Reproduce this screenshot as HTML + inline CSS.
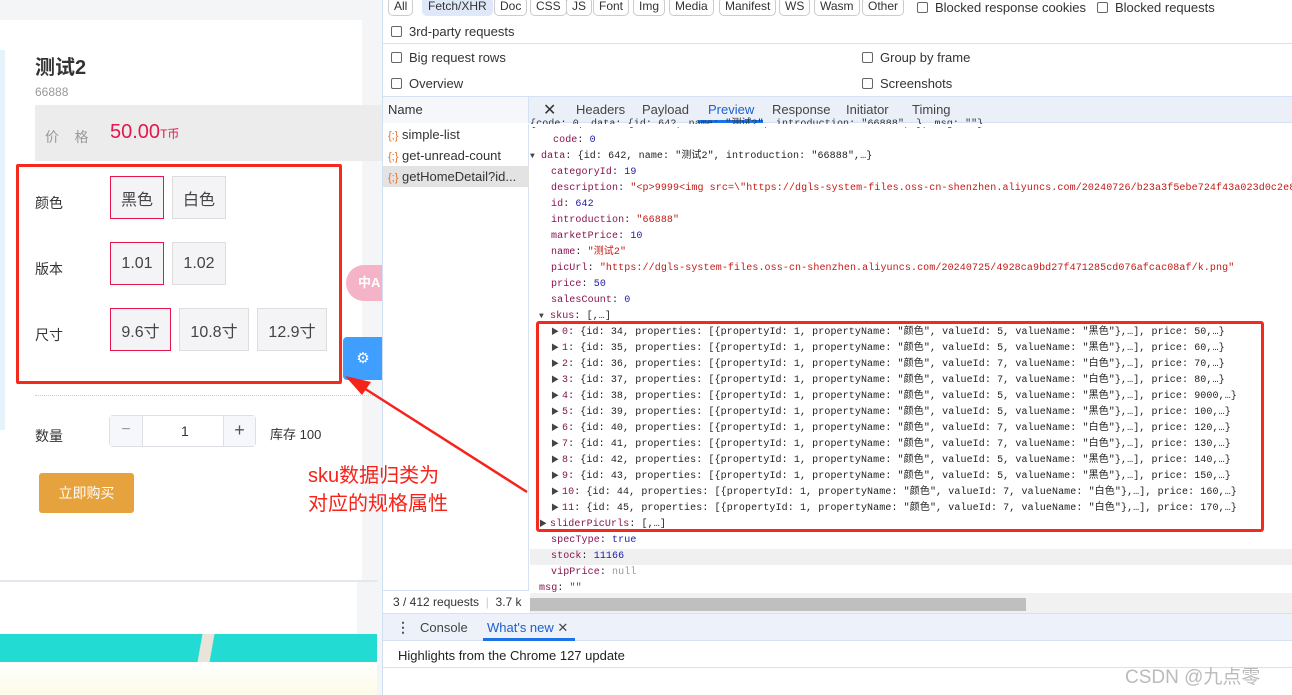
<!DOCTYPE html>
<html><head><meta charset="utf-8"><style>
*{margin:0;padding:0;box-sizing:border-box}
body{width:1292px;height:695px;overflow:hidden;position:relative;background:#fff;font-family:"Liberation Sans","Noto Sans CJK SC",sans-serif;color:#333}
.a{position:absolute;white-space:nowrap}
.btn{position:absolute;border:1px solid #ddd;background:#f4f4f6;font-size:16px;color:#444;display:flex;align-items:center;justify-content:center}
.sel{border-color:#e4164c}
.chip{position:absolute;top:-3px;height:19px;border:1px solid #ccc;border-radius:5px;font-size:12px;line-height:17px;padding:0 5px;color:#333;background:#fff}
.cb{display:inline-block;width:11px;height:11px;border:1px solid #666;border-radius:2px;vertical-align:-1px;margin-right:7px}
.dt{font-size:13px;color:#333}
.j{position:absolute;font-family:"Liberation Mono","Noto Sans CJK SC",monospace;font-size:10px;letter-spacing:0.1px;white-space:nowrap;line-height:16px;color:#222}
.k{color:#881350}.n{color:#1a1aa6}.s{color:#c41a16}.g{color:#999}
.tri{display:inline-block;font-size:8px;color:#444;width:11px}
</style></head><body>
<!-- left page -->
<div class="a" style="left:0;top:0;width:383px;height:695px;background:#f4f5f7"></div>
<div class="a" style="left:0;top:20px;width:362px;height:560px;background:#fff"></div>
<div class="a" style="left:0;top:50px;width:5px;height:380px;background:#e6f3fb"></div>
<div class="a" style="left:35px;top:51px;font-size:20px;font-weight:bold;color:#333">测试2</div>
<div class="a" style="left:35px;top:85px;font-size:12px;color:#999">66888</div>
<div class="a" style="left:35px;top:105px;width:348px;height:56px;background:#ececec"></div>
<div class="a" style="left:45px;top:127px;font-size:14px;color:#999">价&nbsp;&nbsp;&nbsp;&nbsp;格</div>
<div class="a" style="left:110px;top:121px;font-size:20px;color:#e4164c">50.00<span style="font-size:12px">T币</span></div>
<div class="a" style="left:16px;top:164px;width:326px;height:220px;border:3px solid #f52a1f;border-radius:2px"></div>
<div class="a" style="left:35px;top:193px;font-size:14px">颜色</div>
<div class="btn sel" style="left:110px;top:176px;width:54px;height:43px">黑色</div>
<div class="btn" style="left:172px;top:176px;width:54px;height:43px">白色</div>
<div class="a" style="left:35px;top:259px;font-size:14px">版本</div>
<div class="btn sel" style="left:110px;top:242px;width:54px;height:43px">1.01</div>
<div class="btn" style="left:172px;top:242px;width:54px;height:43px">1.02</div>
<div class="a" style="left:35px;top:325px;font-size:14px">尺寸</div>
<div class="btn sel" style="left:110px;top:308px;width:61px;height:43px">9.6寸</div>
<div class="btn" style="left:179px;top:308px;width:70px;height:43px">10.8寸</div>
<div class="btn" style="left:257px;top:308px;width:70px;height:43px">12.9寸</div>
<div class="a" style="left:346px;top:265px;width:40px;height:36px;border-radius:18px 0 0 18px;background:#f5b3c8;color:#fff;font-size:13px;font-weight:bold;line-height:36px;padding-left:12px">中A</div>
<div class="a" style="left:343px;top:337px;width:40px;height:43px;border-radius:4px 0 0 4px;background:#409eff;color:#fff;font-size:15px;text-align:center;line-height:43px">⚙</div>
<div class="a" style="left:35px;top:395px;width:340px;border-top:1px dotted #ccc"></div>
<div class="a" style="left:35px;top:426px;font-size:14px">数量</div>
<div class="a" style="left:109px;top:415px;width:147px;height:32px;border:1px solid #dcdfe6;border-radius:4px;background:#fff"></div>
<div class="a" style="left:110px;top:416px;width:33px;height:30px;background:#f5f7fa;border-right:1px solid #dcdfe6;text-align:center;line-height:28px;color:#999;font-size:16px">−</div>
<div class="a" style="left:223px;top:416px;width:32px;height:30px;background:#f5f7fa;border-left:1px solid #dcdfe6;text-align:center;line-height:28px;color:#555;font-size:18px">+</div>
<div class="a" style="left:181px;top:423px;font-size:14px;color:#333">1</div>
<div class="a" style="left:270px;top:424px;font-size:13px;color:#333">库存 100</div>
<div class="a" style="left:39px;top:473px;width:95px;height:40px;background:#e6a23c;border-radius:3px;color:#fff;font-size:14px;text-align:center;line-height:40px">立即购买</div>
<div class="a" style="left:0;top:580px;width:377px;height:2px;background:#e4e7ed"></div>
<div class="a" style="left:0;top:582px;width:357px;height:52px;background:#fff"></div>
<div class="a" style="left:0;top:634px;width:377px;height:28px;background:#22dcd4"></div>
<div class="a" style="left:200px;top:634px;width:12px;height:28px;background:#e8e4da;transform:skewX(-10deg)"></div>
<div class="a" style="left:0;top:662px;width:377px;height:33px;background:linear-gradient(#fff,#fdfbe8)"></div>
<!-- devtools -->
<div class="a" style="left:382px;top:0;width:910px;height:695px;background:#fff;border-left:1px solid #cfe0f5"></div>
<div class="chip" style="left:388px">All</div>
<div class="chip" style="left:422px;background:#dfe8f8;border-color:#dfe8f8">Fetch/XHR</div>
<div class="chip" style="left:494px">Doc</div>
<div class="chip" style="left:530px">CSS</div>
<div class="chip" style="left:566px">JS</div>
<div class="chip" style="left:593px">Font</div>
<div class="chip" style="left:633px">Img</div>
<div class="chip" style="left:669px">Media</div>
<div class="chip" style="left:719px">Manifest</div>
<div class="chip" style="left:779px">WS</div>
<div class="chip" style="left:814px">Wasm</div>
<div class="chip" style="left:862px">Other</div>
<div class="a dt" style="left:917px;top:0"><span class="cb"></span>Blocked response cookies</div>
<div class="a dt" style="left:1097px;top:0"><span class="cb"></span>Blocked requests</div>
<div class="a dt" style="left:391px;top:24px"><span class="cb"></span>3rd-party requests</div>
<div class="a" style="left:383px;top:43px;width:909px;border-top:1px solid #d6e2f3"></div>
<div class="a dt" style="left:391px;top:50px"><span class="cb"></span>Big request rows</div>
<div class="a dt" style="left:862px;top:50px"><span class="cb"></span>Group by frame</div>
<div class="a dt" style="left:391px;top:76px"><span class="cb"></span>Overview</div>
<div class="a dt" style="left:862px;top:76px"><span class="cb"></span>Screenshots</div>
<div class="a" style="left:383px;top:96px;width:909px;height:27px;background:#ebf0f8;border-top:1px solid #d6e2f3;border-bottom:1px solid #d6e2f3"></div>
<div class="a" style="left:383px;top:97px;width:146px;height:26px;background:#f5f7fb;border-right:1px solid #d6e2f3"></div>
<div class="a dt" style="left:388px;top:102px">Name</div>
<div class="a dt" style="left:543px;top:100px;font-size:16px">✕</div>
<div class="a dt" style="left:576px;top:102px;color:#444">Headers</div>
<div class="a dt" style="left:642px;top:102px;color:#444">Payload</div>
<div class="a dt" style="left:708px;top:102px;color:#1a5fd0">Preview</div>
<div class="a" style="left:698px;top:120px;width:65px;height:3px;background:#1a73e8"></div>
<div class="a dt" style="left:772px;top:102px;color:#444">Response</div>
<div class="a dt" style="left:846px;top:102px;color:#444">Initiator</div>
<div class="a dt" style="left:912px;top:102px;color:#444">Timing</div>
<div class="a" style="left:383px;top:124px;width:146px;height:466px;border-right:1px solid #d6e2f3"></div>
<div class="a" style="left:383px;top:166px;width:146px;height:21px;background:#e3e3e3"></div>
<div class="a dt" style="left:388px;top:127px"><span style="color:#e8702a;font-size:11px">{;}</span> simple-list</div>
<div class="a dt" style="left:388px;top:148px"><span style="color:#e8702a;font-size:11px">{;}</span> get-unread-count</div>
<div class="a dt" style="left:388px;top:169px"><span style="color:#e8702a;font-size:11px">{;}</span> getHomeDetail?id...</div>
<!-- json -->
<div class="j" style="left:530px;top:117px;color:#333">{code: 0, data: {id: 642, name: "测试2", introduction: "66888",…}, msg: ""}</div>
<div class="a" style="left:530px;top:124px;width:762px;height:3px;background:#fff"></div>
<div class="j" style="left:553px;top:133px"><span class="k">code</span>: <span class="n">0</span></div>
<div class="j" style="left:530px;top:149px"><span class="tri">▼</span><span class="k">data</span>: {id: 642, name: "测试2", introduction: "66888",…}</div>
<div class="j" style="left:551px;top:165px"><span class="k">categoryId</span>: <span class="n">19</span></div>
<div class="j" style="left:551px;top:181px"><span class="k">description</span>: <span class="s">"&lt;p&gt;9999&lt;img src=\"https://dgls-system-files.oss-cn-shenzhen.aliyuncs.com/20240726/b23a3f5ebe724f43a023d0c2e8fc</span></div>
<div class="j" style="left:551px;top:197px"><span class="k">id</span>: <span class="n">642</span></div>
<div class="j" style="left:551px;top:213px"><span class="k">introduction</span>: <span class="s">"66888"</span></div>
<div class="j" style="left:551px;top:229px"><span class="k">marketPrice</span>: <span class="n">10</span></div>
<div class="j" style="left:551px;top:245px"><span class="k">name</span>: <span class="s">"测试2"</span></div>
<div class="j" style="left:551px;top:261px"><span class="k">picUrl</span>: <span class="s">"https://dgls-system-files.oss-cn-shenzhen.aliyuncs.com/20240725/4928ca9bd27f471285cd076afcac08af/k.png"</span></div>
<div class="j" style="left:551px;top:277px"><span class="k">price</span>: <span class="n">50</span></div>
<div class="j" style="left:551px;top:293px"><span class="k">salesCount</span>: <span class="n">0</span></div>
<div class="j" style="left:539px;top:309px"><span class="tri">▼</span><span class="k">skus</span>: [,…]</div>
<div class="j" style="left:551px;top:325px"><span class="tri">▶</span><span class="k">0</span>: {id: 34, properties: [{propertyId: 1, propertyName: "颜色", valueId: 5, valueName: "黑色"},…], price: 50,…}</div>
<div class="j" style="left:551px;top:341px"><span class="tri">▶</span><span class="k">1</span>: {id: 35, properties: [{propertyId: 1, propertyName: "颜色", valueId: 5, valueName: "黑色"},…], price: 60,…}</div>
<div class="j" style="left:551px;top:357px"><span class="tri">▶</span><span class="k">2</span>: {id: 36, properties: [{propertyId: 1, propertyName: "颜色", valueId: 7, valueName: "白色"},…], price: 70,…}</div>
<div class="j" style="left:551px;top:373px"><span class="tri">▶</span><span class="k">3</span>: {id: 37, properties: [{propertyId: 1, propertyName: "颜色", valueId: 7, valueName: "白色"},…], price: 80,…}</div>
<div class="j" style="left:551px;top:389px"><span class="tri">▶</span><span class="k">4</span>: {id: 38, properties: [{propertyId: 1, propertyName: "颜色", valueId: 5, valueName: "黑色"},…], price: 9000,…}</div>
<div class="j" style="left:551px;top:405px"><span class="tri">▶</span><span class="k">5</span>: {id: 39, properties: [{propertyId: 1, propertyName: "颜色", valueId: 5, valueName: "黑色"},…], price: 100,…}</div>
<div class="j" style="left:551px;top:421px"><span class="tri">▶</span><span class="k">6</span>: {id: 40, properties: [{propertyId: 1, propertyName: "颜色", valueId: 7, valueName: "白色"},…], price: 120,…}</div>
<div class="j" style="left:551px;top:437px"><span class="tri">▶</span><span class="k">7</span>: {id: 41, properties: [{propertyId: 1, propertyName: "颜色", valueId: 7, valueName: "白色"},…], price: 130,…}</div>
<div class="j" style="left:551px;top:453px"><span class="tri">▶</span><span class="k">8</span>: {id: 42, properties: [{propertyId: 1, propertyName: "颜色", valueId: 5, valueName: "黑色"},…], price: 140,…}</div>
<div class="j" style="left:551px;top:469px"><span class="tri">▶</span><span class="k">9</span>: {id: 43, properties: [{propertyId: 1, propertyName: "颜色", valueId: 5, valueName: "黑色"},…], price: 150,…}</div>
<div class="j" style="left:551px;top:485px"><span class="tri">▶</span><span class="k">10</span>: {id: 44, properties: [{propertyId: 1, propertyName: "颜色", valueId: 7, valueName: "白色"},…], price: 160,…}</div>
<div class="j" style="left:551px;top:501px"><span class="tri">▶</span><span class="k">11</span>: {id: 45, properties: [{propertyId: 1, propertyName: "颜色", valueId: 7, valueName: "白色"},…], price: 170,…}</div>
<div class="j" style="left:539px;top:517px"><span class="tri">▶</span><span class="k">sliderPicUrls</span>: [,…]</div>
<div class="j" style="left:551px;top:533px"><span class="k">specType</span>: <span class="n">true</span></div>
<div class="a" style="left:530px;top:549px;width:762px;height:16px;background:#f0f0f0"></div>
<div class="j" style="left:551px;top:549px"><span class="k">stock</span>: <span class="n">11166</span></div>
<div class="j" style="left:551px;top:565px"><span class="k">vipPrice</span>: <span class="g">null</span></div>
<div class="j" style="left:539px;top:581px"><span class="k">msg</span>: <span class="s">""</span></div>
<div class="a" style="left:536px;top:321px;width:728px;height:211px;border:3px solid #f52a1f;border-radius:3px"></div>
<div class="a" style="left:383px;top:590px;width:146px;height:23px;border-top:1px solid #d6e2f3;background:#fff"></div>
<div class="a" style="left:393px;top:595px;font-size:12px;color:#333">3 / 412 requests&nbsp;&nbsp;<span style="color:#ccc">|</span>&nbsp;&nbsp;3.7 k</div>
<div class="a" style="left:530px;top:593px;width:762px;height:20px;background:#f1f1f1"></div>
<div class="a" style="left:530px;top:598px;width:496px;height:13px;background:#bfbfbf"></div>
<div class="a" style="left:383px;top:613px;width:909px;height:28px;background:#edf1f9;border-top:1px solid #d6e2f3;border-bottom:1px solid #d6e2f3"></div>
<div class="a" style="left:396px;top:619px;font-size:14px;color:#555;font-weight:bold">⋮</div>
<div class="a dt" style="left:420px;top:620px;color:#444">Console</div>
<div class="a dt" style="left:487px;top:620px;color:#1a5fd0">What's new <span style="color:#444">✕</span></div>
<div class="a" style="left:483px;top:638px;width:92px;height:3px;background:#1a73e8"></div>
<div class="a dt" style="left:398px;top:648px;color:#222">Highlights from the Chrome 127 update</div>
<div class="a" style="left:383px;top:667px;width:909px;border-top:1px solid #d6e2f3"></div>
<div class="a" style="left:1125px;top:662px;font-size:19px;color:#bbb">CSDN @九点零</div>
<!-- annotation on top -->
<div class="a" style="left:308px;top:462px;font-size:20px;color:#f5231a;line-height:28px">sku数据归类为<br>对应的规格属性</div>
<svg class="a" style="left:0;top:0" width="1292" height="695"><line x1="527" y1="492" x2="356" y2="383" stroke="#f5231a" stroke-width="2.5"/><polygon points="345,376 371,382 362,395" fill="#f5231a"/></svg>
</body></html>
